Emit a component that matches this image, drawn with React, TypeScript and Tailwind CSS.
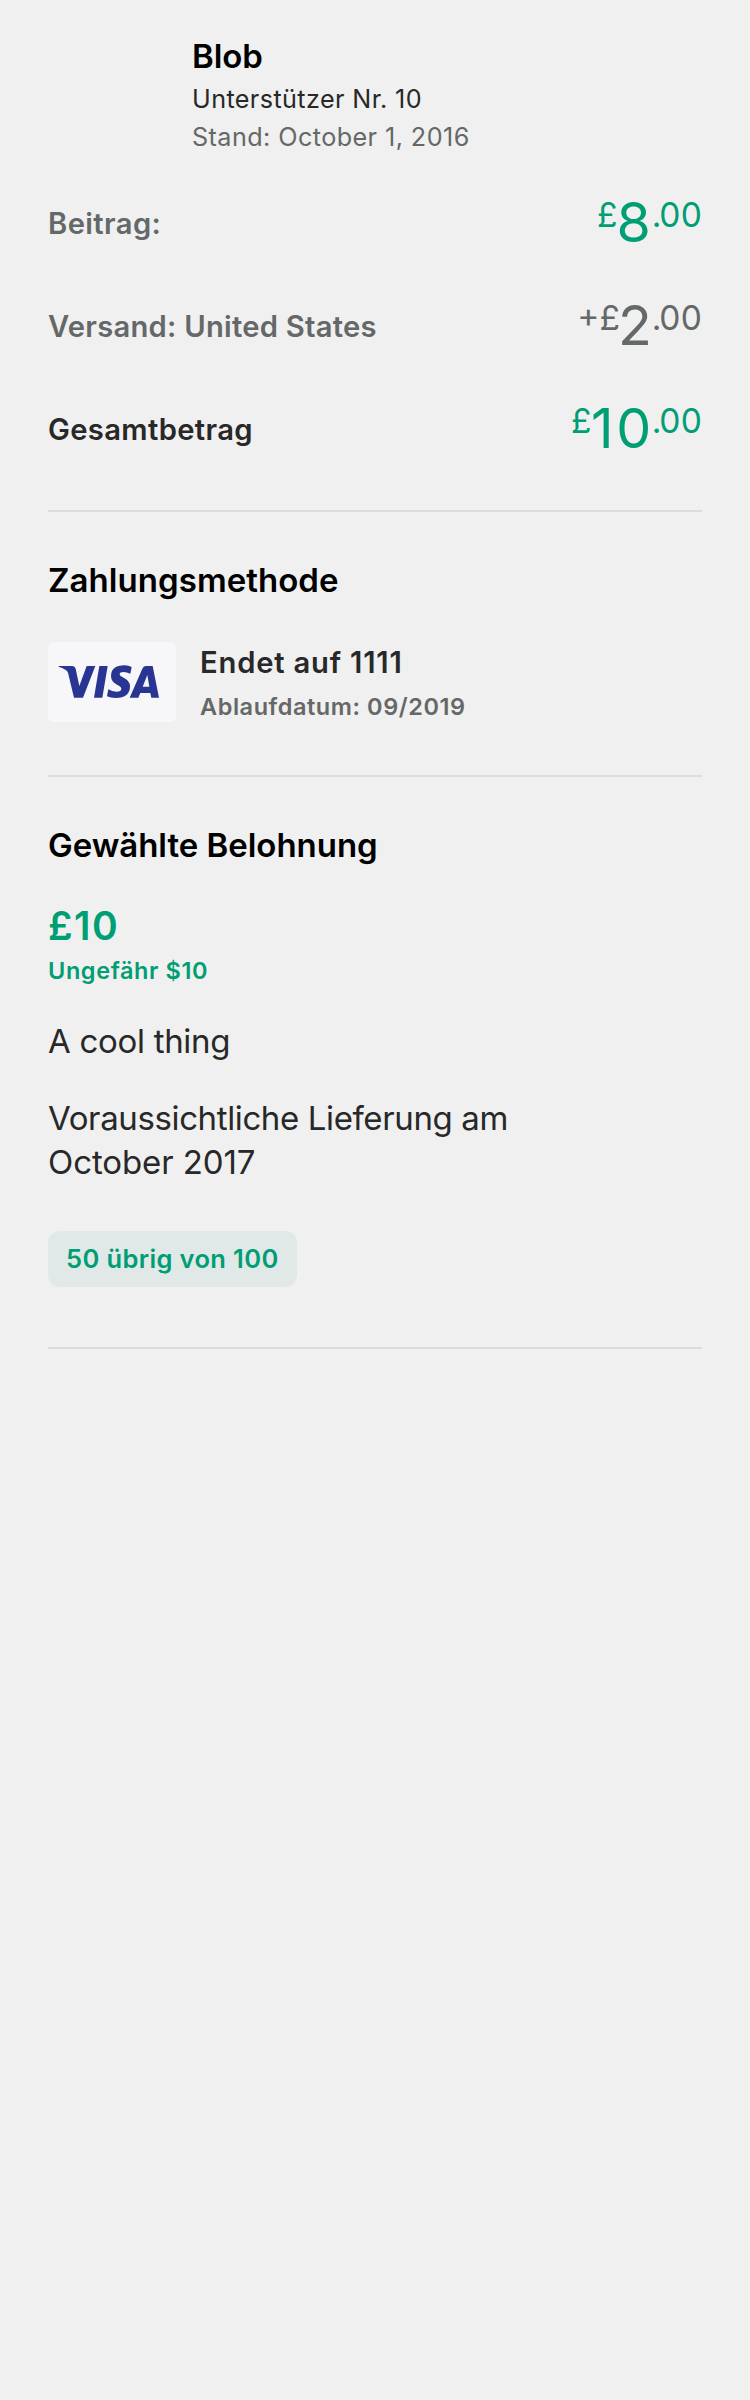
import React from "react";

type Tone = "green" | "gray";

function Price({
  sign,
  whole,
  tone,
  wholeClass,
}: {
  sign: string;
  whole: string;
  tone: Tone;
  wholeClass: string;
}) {
  return (
    <div
      className={`flex items-start pt-[23px] leading-10 ${
        tone === "green" ? "text-[#009e74]" : "text-[#656868]"
      }`}
    >
      <span className="text-[33.5px]">{sign}</span>
      <span className={`mt-[7px] text-[55.5px] ${wholeClass}`}>{whole}</span>
      <span className="text-[33.5px] tracking-[-2.2px]">.</span>
      <span className="-mr-[0.5px] text-[33.5px] tracking-[0.5px]">00</span>
    </div>
  );
}

function Divider({ className }: { className: string }) {
  return <div className={`h-[2px] bg-[#dcdcdc] ${className}`} />;
}

function VisaCard() {
  return (
    <svg viewBox="0 0 384 240" className="h-20 w-32 shrink-0" role="img" aria-label="Visa">
      <rect width="384" height="240" rx="17" fill="#f7f7f9" />
      <g fill="#283593">
        <path d="M32 72 H73 Q81 72 83 80 L94 132 L116 72 H142 L105 167 H78 L60 92 Q58 86 52 83 Q43 77 32 74 Z" />
        <path d="M154 72 H179 L163 167 H138 Z" />
        <path d="M251 75 L247 95 Q236 90 227 90 Q215 90 215 97 Q215 102 227 107 Q246 116 246 133 Q246 168 203 168 Q187 168 177 163 L181 142 Q192 149 205 149 Q220 149 220 140 Q220 134 207 128 Q189 119 189 102 Q189 70 230 70 Q242 70 251 75 Z" />
        <path
          fillRule="evenodd"
          d="M293 72 H314 L333 167 H310 L307 153 H277 L271 167 H245 L283 80 Q286 72 293 72 Z M298 99 L284 134 H304 Z"
        />
      </g>
    </svg>
  );
}

export default function App() {
  return (
    <main className="min-h-[2400px] bg-[#f0f0f0] px-12 pt-9 font-['Inter',sans-serif] text-[#282828]">
      <header className="pl-36">
        <h1 className="text-[33px] leading-10 font-semibold tracking-[-0.06px] text-black">Blob</h1>
        <p className="mt-1 text-[25.2px] leading-[38px] tracking-[0.39px]">Unterstützer Nr. 10</p>
        <p className="text-[25.2px] leading-[38px] tracking-[0.42px] text-[#656868]">
          Stand: October 1, 2016
        </p>
      </header>

      <section className="mt-4">
        <div className="flex h-[103px] items-start justify-between">
          <span className="pt-8 text-[29.2px] leading-10 font-semibold tracking-[0.4px] text-[#656868]">
            Beitrag:
          </span>
          <Price sign="£" whole="8" tone="green" wholeClass="-ml-[1px] mr-[1px]" />
        </div>
        <div className="flex h-[103px] items-start justify-between">
          <span className="pt-8 text-[29.2px] leading-10 font-semibold tracking-[0.25px] text-[#656868]">
            Versand: United States
          </span>
          <Price sign="+£" whole="2" tone="gray" wholeClass="-ml-[2px]" />
        </div>
        <div className="flex h-[103px] items-start justify-between">
          <span className="pt-8 text-[29.2px] leading-10 font-semibold tracking-[0.35px]">
            Gesamtbetrag
          </span>
          <Price sign="£" whole="10" tone="green" wholeClass="-ml-[0.5px] -mr-[2px] tracking-[2.6px]" />
        </div>
      </section>

      <Divider className="mt-[29px]" />

      <section className="mt-12">
        <h2 className="text-[33px] leading-10 font-semibold tracking-[0.05px] text-black">
          Zahlungsmethode
        </h2>
        <div className="mt-[42px] flex h-20 gap-6">
          <VisaCard />
          <div className="pt-px">
            <p className="text-[29.2px] leading-10 font-semibold tracking-[0.8px]">Endet auf 1111</p>
            <p className="mt-2 text-[23.5px] leading-8 font-semibold tracking-[0.56px] text-[#656868]">
              Ablaufdatum: 09/2019
            </p>
          </div>
        </div>
      </section>

      <Divider className="mt-[53px]" />

      <section className="mt-12">
        <h2 className="text-[33px] leading-10 font-semibold tracking-[-0.03px] text-black">
          Gewählte Belohnung
        </h2>
        <p className="mt-[37px] text-[39px] leading-[48px] font-semibold tracking-[1.5px] text-[#009e74]">
          £10
        </p>
        <p className="mt-[5px] text-[23.5px] leading-8 font-semibold tracking-[0.6px] text-[#009e74]">
          Ungefähr $10
        </p>
        <p className="mt-[34px] text-[33px] leading-10 tracking-[-0.3px]">A cool thing</p>
        <p className="mt-[35px] w-[480px] text-[33px] leading-[44px] tracking-[-0.38px]">
          Voraussichtliche Lieferung am <span className="tracking-[-0.1px]">October 2017</span>
        </p>
        <span className="mt-[47px] flex h-14 w-[249px] items-center rounded-xl bg-[#e1e9e8] pl-[18px] text-[25.5px] leading-[56px] font-semibold tracking-[0.37px] whitespace-nowrap text-[#009e74]">
          50 übrig von 100
        </span>
      </section>

      <Divider className="mt-[60px]" />
    </main>
  );
}
